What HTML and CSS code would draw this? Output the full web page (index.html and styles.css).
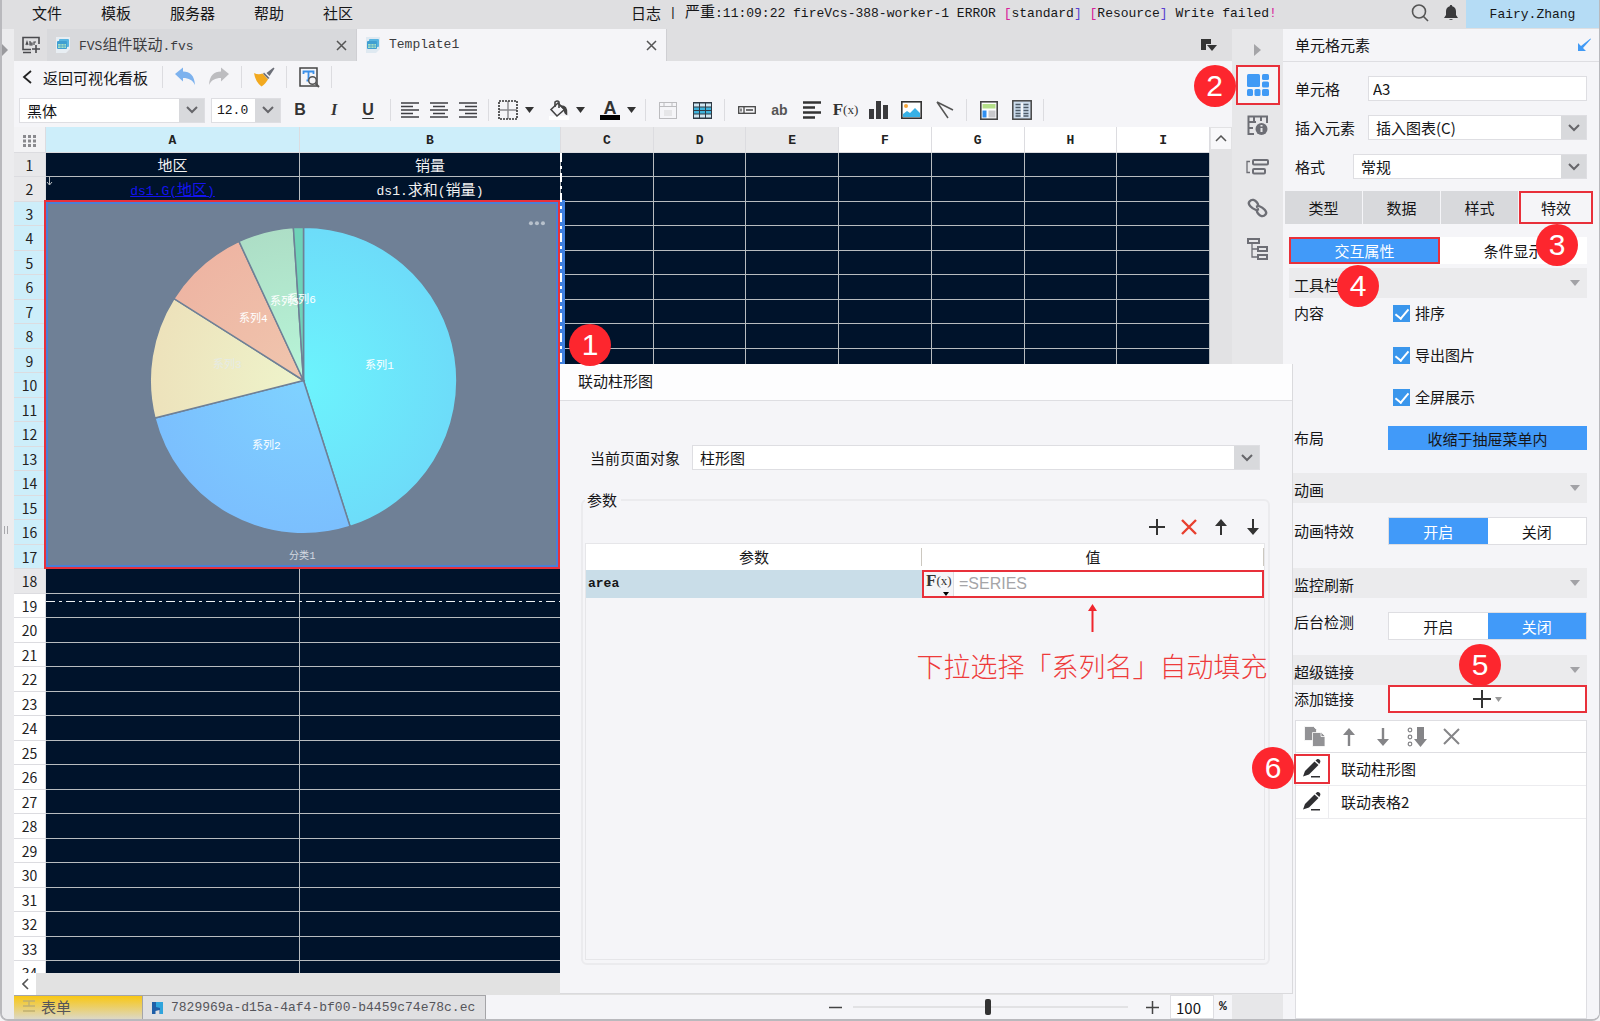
FILE: index.html
```html
<!DOCTYPE html>
<html lang="zh-CN">
<head>
<meta charset="utf-8">
<title>Template1</title>
<link rel="stylesheet" href="styles.css">
</head>
<body>
<div class="app">
  <header class="menubar">
    <nav class="menus">
      <a href="#">文件</a><a href="#">模板</a><a href="#">服务器</a><a href="#">帮助</a><a href="#">社区</a>
    </nav>
    <p class="log mono"><span class="cjk">日志</span><span class="bar">|</span><span><span class="cjk">严重</span>:11:09:22 fireVcs-388-worker-1 ERROR <i>[</i>standard<b>]</b> <i>[</i>Resource<b>]</b> Write failed<i>!</i></span></p>
    <button class="bare search" aria-label="搜索"><svg width="20" height="20" viewBox="0 0 20 20" fill="none" stroke="#555" stroke-width="1.6"><circle cx="9" cy="8.500" r="6.500"/><path d="M13.500 13.500l4.500 4.500"/></svg></button>
    <button class="bare bell" aria-label="通知"><svg width="16" height="18" viewBox="0 0 16 18" fill="#3a3a3c"><path d="M8 1c.8 0 1.200.5 1.200 1.200C12 3 13 5 13 7.500V11l2 3H1l2-3V7.500C3 5 4 3 6.800 2.200 6.800 1.500 7.200 1 8 1zM6.300 15h3.400c-.2 1.200-3.200 1.200-3.400 0z"/></svg></button>
    <button class="user mono">Fairy.Zhang</button>
  </header>

  <div class="body">
    <aside class="edge">
      <svg width="6" height="12" viewBox="0 0 6 12" fill="#9a9a9e"><path d="M0 0l6 6-6 6z"/></svg>
      <span class="grip"></span>
    </aside>

    <main class="main">
      <div class="tabs">
        <button class="bare new-tab" aria-label="新建"><svg width="20" height="18" viewBox="0 0 20 18" fill="none" stroke="#4a4a4e" stroke-width="1.6"><path d="M10 13.500H2V1.500h16V8M2 16.500h8M15 9v8M11 13h8"/><path d="M5 9l1-3 1 3M9 5v4h2V7H9M15 6h-2v3" stroke-width="1.200"/></svg></button>
        <div class="tab">
          <svg class="doc" width="16" height="18" viewBox="0 0 16 18"><path d="M1 1h14v12l-4 4H1z" fill="#e8eef3"/><rect x="4" y="3" width="10" height="8" rx="1" fill="#58b4e0"/><rect x="2" y="5" width="10" height="8" rx="1" fill="#3f9fd2"/><rect x="3" y="8" width="8" height="4" fill="#a6dfc3"/><path d="M3 10h8M6 8v4M9 8v4" stroke="#3f9fd2" stroke-width=".7"/></svg>
          <span class="mono name">FVS<span class="cjk">组件联动</span>.fvs</span>
          <button class="bare" aria-label="关闭"><svg width="11" height="11" viewBox="0 0 11 11" stroke="#555" stroke-width="1.500"><path d="M1 1l9 9M10 1l-9 9"/></svg></button>
        </div>
        <div class="tab active">
          <svg class="doc" width="16" height="18" viewBox="0 0 16 18"><path d="M1 1h14v12l-4 4H1z" fill="#dfe9f1"/><rect x="4" y="3" width="10" height="8" rx="1" fill="#58b4e0"/><rect x="2" y="5" width="10" height="8" rx="1" fill="#3f9fd2"/><rect x="3" y="8" width="8" height="4" fill="#a6dfc3"/><path d="M3 10h8M6 8v4M9 8v4" stroke="#3f9fd2" stroke-width=".7"/></svg>
          <span class="mono name">Template1</span>
          <button class="bare" aria-label="关闭"><svg width="11" height="11" viewBox="0 0 11 11" stroke="#555" stroke-width="1.500"><path d="M1 1l9 9M10 1l-9 9"/></svg></button>
        </div>
        <button class="bare tab-list" aria-label="标签列表"><svg width="16" height="13" viewBox="0 0 16 13" fill="#333"><path d="M0 0h10v5H5v6H0z"/><path d="M6 6h10l-5 6z"/></svg></button>
      </div>

      <div class="toolbar">
        <button class="back"><svg width="10" height="14" viewBox="0 0 10 14" fill="none" stroke="#222" stroke-width="1.800"><path d="M9 1L2 7l7 6"/></svg>返回可视化看板</button>
        <span class="sep wide"></span>
        <button class="tool" aria-label="撤销"><svg width="22" height="20" viewBox="0 0 22 20" fill="#7db2ee"><path d="M1 7l8-6.500V4.500c7 0 11.500 4 12 13.500-2.500-5-6-7-12-7v3.500z"/></svg></button>
        <button class="tool" aria-label="重做"><svg width="22" height="20" viewBox="0 0 22 20" fill="#bdbdc0"><path d="M21 7l-8-6.500V4.500C6 4.500 1.500 8.500 1 18c2.500-5 6-7 12-7v3.500z"/></svg></button>
        <span class="sep"></span>
        <button class="tool" aria-label="格式刷"><svg width="22" height="20" viewBox="0 0 22 20"><path d="M20.500.5l1 1-5 7.500-3-3z" fill="#6c6f78"/><path d="M11 5.500l5.500 5.500-1.500 1L10 7z" fill="#6c6f78"/><path d="M1 6c3 1.500 6 1.500 8.500.5l5.500 6c-1.500 2.500-3.500 5-6.500 7C4.500 16.500 2 12 1 6z" fill="#f2a91f"/></svg></button>
        <span class="sep"></span>
        <button class="tool" aria-label="预览"><svg width="21" height="21" viewBox="0 0 21 21" fill="none"><rect x="1" y="1" width="17" height="18" stroke="#444" stroke-width="1.500"/><path d="M4.500 7V4.500h10V7M9.500 4.500v9M7.500 13.500h4" stroke="#3b8fe8" stroke-width="1.800"/><circle cx="13.500" cy="13.500" r="3.800" fill="#f5f5f8" stroke="#555" stroke-width="1.500"/><path d="M16.500 16.500l3.500 3.500" stroke="#555" stroke-width="2"/></svg></button>
        <span class="sep"></span>
      </div>

      <div class="toolbar format">
        <span class="combo font"><select aria-label="字体"><option>黑体</option></select><span class="arrow"><svg width="12" height="8" viewBox="0 0 12 8"><path d="M1 1l5 5 5-5"/></svg></span></span>
        <span class="combo size"><select class="mono" aria-label="字号"><option>12.0</option></select><span class="arrow"><svg width="12" height="8" viewBox="0 0 12 8"><path d="M1 1l5 5 5-5"/></svg></span></span>
        <button class="tool glyph b">B</button>
        <button class="tool glyph i">I</button>
        <button class="tool glyph u">U</button>
        <span class="sep"></span>
        <button class="tool narrow" aria-label="左对齐"><svg width="19" height="16" viewBox="0 0 19 16" stroke="#3f3f43" stroke-width="1.700"><path d="M0 1h18M0 4.500h12M0 8h18M0 11.500h12M0 15h18"/></svg></button>
        <button class="tool narrow" aria-label="居中"><svg width="19" height="16" viewBox="0 0 19 16" stroke="#3f3f43" stroke-width="1.700"><path d="M0 1h18M3 4.500h12M0 8h18M3 11.500h12M0 15h18"/></svg></button>
        <button class="tool narrow" aria-label="右对齐"><svg width="19" height="16" viewBox="0 0 19 16" stroke="#3f3f43" stroke-width="1.700"><path d="M0 1h18M6 4.500h12M0 8h18M6 11.500h12M0 15h18"/></svg></button>
        <span class="sep"></span>
        <button class="tool drop" aria-label="边框"><svg width="20" height="20" viewBox="0 0 20 20" fill="none"><path d="M10 1v18M1 10h18" stroke="#8a8a8e" stroke-width="1.400"/><path d="M1 1h18v18H1z" stroke="#333" stroke-width="1.600" stroke-dasharray="2 1"/></svg><svg class="caret" width="9" height="6" viewBox="0 0 9 6"><path d="M0 0h9L4.500 6z"/></svg></button>
        <button class="tool drop gap" aria-label="填充"><svg width="20" height="20" viewBox="0 0 20 20" fill="none" stroke="#444" stroke-width="1.600"><rect x="0" y="16" width="20" height="4" fill="#fff" stroke="none"/><path d="M2 9.500L9 3l6.500 6.500L8 16z"/><path d="M6 7V2q2.500-2 4 0v6"/><path d="M12 6c4 0 6 2 5.500 8-2-1-2-3-2-4.500z" fill="#444"/></svg><svg class="caret" width="9" height="6" viewBox="0 0 9 6"><path d="M0 0h9L4.500 6z"/></svg></button>
        <button class="tool drop gap" aria-label="字体颜色"><span class="ink">A</span><svg class="caret" width="9" height="6" viewBox="0 0 9 6"><path d="M0 0h9L4.500 6z"/></svg></button>
        <span class="sep"></span>
        <button class="tool" aria-label="合并"><svg width="18" height="17" viewBox="0 0 18 17" fill="none" stroke="#bcbcbf"><rect x=".5" y=".5" width="17" height="16"/><path d="M1 4.500h16M5 1v4M13 1v4" /><path d="M5 8h8v6H5z" fill="#e6e6e8" stroke="none"/></svg></button>
        <button class="tool" aria-label="拆分"><svg width="19" height="17" viewBox="0 0 19 17"><rect width="19" height="17" fill="#2f3a45"/><path d="M1 1.500h5v3H1zM7 1.500h5v3H7zM13 1.500h5v3h-5zM1 12.500h5v3H1zM7 12.500h5v3H7zM13 12.500h5v3h-5z" fill="#cfe6f2"/><path d="M1 5.500h5v2.500H1zM7 5.500h5v2.500H7zM13 5.500h5v2.500h-5zM1 9h5v2.500H1zM7 9h5v2.500H7zM13 9h5v2.500h-5z" fill="#3fb3dc"/></svg></button>
        <span class="sep"></span>
        <button class="tool mid" aria-label="控件"><svg width="18" height="8" viewBox="0 0 18 8" fill="none" stroke="#444" stroke-width="1.300"><rect x=".7" y=".7" width="16.600" height="6.600"/><path d="M6 1v6M8 4h7M3 2.500v3"/></svg></button>
        <button class="tool mid ab">ab</button>
        <button class="tool mid" aria-label="富文本"><svg width="19" height="18" viewBox="0 0 19 18" stroke="#333" stroke-width="2.400"><path d="M0 1.500h18M0 6.500h12M0 11.500h18M0 16.500h12"/></svg></button>
        <button class="tool mid fx">F<small>(x)</small></button>
        <button class="tool mid" aria-label="图表"><svg width="19" height="18" viewBox="0 0 19 18" fill="#3a3a3d"><path d="M0 8h5v10H0zM7 0h5v18H7zM14 4h5v14h-5z"/></svg></button>
        <button class="tool mid" aria-label="图片"><svg width="21" height="18" viewBox="0 0 21 18"><rect x=".8" y=".8" width="19.400" height="16.400" fill="#fff" stroke="#333" stroke-width="1.600"/><circle cx="5" cy="5" r="2" fill="#f7a63c"/><path d="M2 16v-3l4-3 3 2 5-5 5 5v4z" fill="#37b1e6"/></svg></button>
        <button class="tool mid" aria-label="斜线"><svg width="18" height="18" viewBox="0 0 18 18" fill="none" stroke="#555" stroke-width="1.500"><path d="M1 1l16 8M1 1l11 16"/></svg></button>
        <span class="sep"></span>
        <button class="tool mid" aria-label="报表块"><svg width="18" height="19" viewBox="0 0 18 19"><rect x=".8" y=".8" width="16.400" height="17.400" fill="#fff" stroke="#444" stroke-width="1.600"/><path d="M2.500 3h13v4.500h-13z" fill="#b5e08a"/><path d="M2.500 9.500h4v7h-4z" fill="#2f8ff0"/><path d="M8.500 9.500h7v7h-7z" fill="#c9c9cc"/></svg></button>
        <button class="tool mid" aria-label="子报表"><svg width="20" height="20" viewBox="0 0 20 20"><rect x=".8" y=".8" width="18.400" height="18.400" fill="#ccdcec" stroke="#444" stroke-width="1.500"/><path d="M3.500 4.500h5M3.500 7.500h5M3.500 10.500h5M3.500 13.500h5M3.500 16h5M11.500 4.500h5M11.500 7.500h5M11.500 10.500h5M11.500 13.500h5M11.500 16h5" stroke="#4d5b68" stroke-width="1.300"/><path d="M10 3v14" stroke="#fff" stroke-width="1.500"/></svg></button>
        <span class="sep"></span>
      </div>

      <div class="work">
        <div class="sheet">
          <table class="grid">
            <colgroup><col class="c-num"><col class="c-a"><col class="c-b"><col span="7"></colgroup>
            <thead>
              <tr>
                <th class="corner"><svg width="14" height="12" viewBox="0 0 14 12" fill="#8a8a8e"><path d="M0 0h3v3H0zM5 0h3v3H5zM10 0h3v3h-3zM0 4.500h3v3H0zM5 4.500h3v3H5zM10 4.500h3v3h-3zM0 9h3v3H0zM5 9h3v3H5zM10 9h3v3h-3z"/></svg></th>
                <th class="on">A</th><th class="on">B</th><th class="in">C</th><th class="in">D</th><th class="in">E</th><th>F</th><th>G</th><th>H</th><th>I</th>
              </tr>
            </thead>
            <tbody id="rows">
              <tr><th class="in">1</th><td><span class="cjk">地区</span></td><td><span class="cjk">销量</span></td><td></td><td></td><td></td><td></td><td></td><td></td><td></td></tr>
              <tr><th class="in">2</th><td class="expand"><svg width="7" height="9" viewBox="0 0 7 9" fill="none" stroke="#b7bcbf"><path d="M3.500 0v8M1 5l2.500 3L6 5"/></svg><a href="#">ds1.G(<span class="cjk">地区</span>)</a></td><td>ds1.<span class="cjk">求和</span>(<span class="cjk">销量</span>)</td><td></td><td></td><td></td><td></td><td></td><td></td><td></td></tr>
              <tr><th class="on">3</th>
                <td class="chart" colspan="2" rowspan="15">
                  <div class="selection">
                    <svg class="pie" viewBox="1 0 511 364" preserveAspectRatio="xMidYMid meet" stroke="#6f8096" stroke-width="1.500">
                      <defs>
                        <radialGradient id="g1" gradientUnits="userSpaceOnUse" cx="258" cy="178" r="153"><stop offset="0" stop-color="#6cf4fd"/><stop offset="1" stop-color="#6ddcf9"/></radialGradient>
                        <radialGradient id="g2" gradientUnits="userSpaceOnUse" cx="258" cy="178" r="153"><stop offset="0" stop-color="#7fd2ff"/><stop offset="1" stop-color="#7bbffe"/></radialGradient>
                        <radialGradient id="g3" gradientUnits="userSpaceOnUse" cx="258" cy="178" r="153"><stop offset="0" stop-color="#eef4cb"/><stop offset="1" stop-color="#ede2bb"/></radialGradient>
                        <radialGradient id="g4" gradientUnits="userSpaceOnUse" cx="258" cy="178" r="153"><stop offset="0" stop-color="#f0c6ae"/><stop offset="1" stop-color="#eeb5a3"/></radialGradient>
                        <radialGradient id="g5" gradientUnits="userSpaceOnUse" cx="258" cy="178" r="153"><stop offset="0" stop-color="#b8f5d8"/><stop offset="1" stop-color="#addec6"/></radialGradient>
                      </defs>
                      <path fill="url(#g1)" d="M258 178V25A153 153 0 0 1 304.500 323.800z"/>
                      <path fill="url(#g2)" d="M258 178L304.500 323.800A153 153 0 0 1 109.700 215.500z"/>
                      <path fill="url(#g3)" d="M258 178L109.700 215.500A153 153 0 0 1 128.700 96.200z"/>
                      <path fill="url(#g4)" d="M258 178L128.700 96.200A153 153 0 0 1 193.600 39.200z"/>
                      <path fill="url(#g5)" d="M258 178L193.600 39.200A153 153 0 0 1 247.900 25.300z"/>
                      <path fill="#6fd3b8" d="M258 178L247.900 25.300A153 153 0 0 1 258 25z"/>
                      <g stroke="none" fill="#fff" font-size="11" text-anchor="middle">
                        <text x="334" y="167">系列1</text><text x="221" y="246">系列2</text><text x="182" y="166" fill="#e6ebe4">系列3</text><text x="208" y="120">系列4</text><text x="239" y="103">系列5</text><text x="256" y="101">系列6</text>
                        <text x="257" y="356" font-size="10" fill="#d5dbe2">分类1</text>
                      </g>
                      <g stroke="none" fill="#b8c1cc"><circle cx="485" cy="21" r="2"/><circle cx="491" cy="21" r="2"/><circle cx="497" cy="21" r="2"/></g>
                    </svg>
                    <span class="badge b1">1</span>
                  </div>
                </td><td></td><td></td><td></td><td></td><td></td><td></td><td></td></tr>
            </tbody>
          </table>
          <span class="page-break across"></span>
          <span class="page-break down"></span>
        </div>
        <div class="vscroll"><button class="bare" aria-label="向上"><svg width="12" height="7" viewBox="0 0 12 7" fill="none" stroke="#555" stroke-width="1.500"><path d="M1 6l5-5 5 5"/></svg></button></div>
      </div>
      <div class="hscroll"><button class="bare" aria-label="向左"><svg width="7" height="12" viewBox="0 0 7 12" fill="none" stroke="#555" stroke-width="1.600"><path d="M6 1L1 6l5 5"/></svg></button></div>

      <footer class="status">
        <button class="page current"><svg width="12" height="12" viewBox="0 0 12 12" fill="none" stroke="#c0b070" stroke-width="1.400"><path d="M0 1h12M0 6h12M0 11h12M6 1v5"/></svg>表单</button>
        <button class="page file mono"><svg width="11" height="12" viewBox="0 0 11 12"><path d="M0 0h11v12H7.500V8L3.500 9v3H0z" fill="#1f5fa8"/><path d="M4 0h7v12H8V6L4 5z" fill="#2fa4dc"/></svg>7829969a-d15a-4af4-bf00-b4459c74e78c.ec</button>
        <div class="zoom">
          <button class="bare" aria-label="缩小"><svg width="13" height="13" viewBox="0 0 13 13" stroke="#444" stroke-width="1.500"><path d="M0 6.500h13"/></svg></button>
          <input type="range" min="0" max="100" value="49" aria-label="缩放">
          <button class="bare" aria-label="放大"><svg width="13" height="13" viewBox="0 0 13 13" stroke="#444" stroke-width="1.500"><path d="M0 6.500h13M6.500 0v13"/></svg></button>
          <label class="percent mono"><input class="cjk" type="text" value="100">%</label>
        </div>
      </footer>
    </main>

    <nav class="rail">
      <svg class="fold" width="7" height="12" viewBox="0 0 7 12" fill="#a5a5a8"><path d="M0 0l7 6-7 6z"/></svg>
      <button class="bare marked" aria-label="单元格元素"><svg width="22" height="22" viewBox="0 0 22 22" fill="#419af5"><rect x="0" y="0" width="13" height="13" rx="1.500"/><rect x="15" y="0" width="7" height="6" rx="1.500"/><rect x="15" y="7.500" width="7" height="6" rx="1.500"/><rect x="0" y="15" width="6" height="7" rx="1.500"/><rect x="7.500" y="15" width="6" height="7" rx="1.500"/><rect x="15" y="15" width="7" height="7" rx="1.500"/></svg><span class="badge b2">2</span></button>
      <button class="bare" aria-label="单元格属性"><svg width="22" height="22" viewBox="0 0 22 22" fill="none" stroke="#6d6e75" stroke-width="2"><path d="M20 8V1.500H1.500V19H7M7 1v6M14 1v5M2 7h7M2 13h4"/><circle cx="14.500" cy="14" r="6" fill="#6d6e75" stroke="none"/><path d="M14.500 13v4M14.500 10v1.500" stroke="#e7e7e9"/></svg></button>
      <button class="bare" aria-label="悬浮元素"><svg width="24" height="18" viewBox="0 0 24 18" fill="none" stroke="#6d6e75" stroke-width="2"><rect x="7" y="2" width="15" height="4.500" rx="1"/><rect x="7" y="11" width="12" height="4.500" rx="1"/><path d="M4 3.500H1v11h3" stroke-width="1.300"/></svg></button>
      <button class="bare" aria-label="超级链接"><svg width="22" height="20" viewBox="0 0 22 20" fill="none" stroke="#6d6e75" stroke-width="2.400"><path d="M9 12C5 10.500 0 6.500 2.500 3.500S8 2 10 4.500s1 4-1 4.500M12 8c4 1.500 9 5.500 6.500 8.500S13 18 11 15.500s-1-4 1-4.500"/></svg></button>
      <button class="bare" aria-label="条件属性"><svg width="22" height="22" viewBox="0 0 22 22" fill="none" stroke="#6d6e75" stroke-width="2"><rect x="1" y="1" width="11" height="4"/><rect x="11" y="9" width="9" height="4"/><rect x="11" y="17" width="9" height="4"/><path d="M5 6v13h5M5 11h5" stroke-width="1.300"/></svg></button>
    </nav>

    <aside class="panel">
      <h1>单元格元素<svg width="14" height="14" viewBox="0 0 14 14" fill="#419af5"><path d="M13.500.5l.5.5-8 9 3 3H1V5l3 3z"/></svg></h1>
      <form class="fields">
        <p><label for="cell">单元格</label><input class="cjk" id="cell" type="text" value="A3"></p>
        <p><label for="insert">插入元素</label><span class="combo"><select id="insert"><option>插入图表(C)</option></select><span class="arrow"><svg width="12" height="8" viewBox="0 0 12 8"><path d="M1 1l5 5 5-5"/></svg></span></span></p>
        <p><label class="short" for="format">格式</label><span class="combo"><select id="format"><option>常规</option></select><span class="arrow"><svg width="12" height="8" viewBox="0 0 12 8"><path d="M1 1l5 5 5-5"/></svg></span></span></p>
      </form>
      <div class="ptabs"><button>类型</button><button>数据</button><button>样式</button><button class="marked">特效<span class="badge b3">3</span></button></div>
      <div class="subtabs"><button class="marked">交互属性<span class="badge b4">4</span></button><button>条件显示</button></div>

      <h2 class="first">工具栏<svg width="10" height="6" viewBox="0 0 10 6"><path d="M0 0h10L5 6z"/></svg></h2>
      <div class="row tall"><span class="name">内容</span>
        <div class="checks">
          <label><input type="checkbox" checked>排序</label>
          <label><input type="checkbox" checked>导出图片</label>
          <label><input type="checkbox" checked>全屏展示</label>
        </div>
      </div>
      <div class="row layout"><span class="name">布局</span><button class="fold-btn">收缩于抽屉菜单内</button></div>

      <h2 class="spaced">动画<svg width="10" height="6" viewBox="0 0 10 6"><path d="M0 0h10L5 6z"/></svg></h2>
      <div class="row"><span class="name">动画特效</span><div class="seg"><button class="on">开启</button><button>关闭</button></div></div>

      <h2 class="spaced">监控刷新<svg width="10" height="6" viewBox="0 0 10 6"><path d="M0 0h10L5 6z"/></svg></h2>
      <div class="row top"><span class="name">后台检测</span><div class="seg"><button>开启</button><button class="on">关闭</button></div></div>

      <h2>超级链接<svg width="10" height="6" viewBox="0 0 10 6"><path d="M0 0h10L5 6z"/></svg></h2>
      <div class="row flush"><span class="name">添加链接</span><button class="add marked" aria-label="添加链接"><svg width="18" height="18" viewBox="0 0 18 18" stroke="#333" stroke-width="2"><path d="M0 9h18M9 0v18"/></svg><svg width="7" height="5" viewBox="0 0 7 5" fill="#999"><path d="M0 0h7L3.500 5z"/></svg><span class="badge b5">5</span></button></div>

      <div class="links">
        <div class="link-tools">
          <button class="bare" aria-label="复制"><svg width="22" height="21" viewBox="0 0 22 21" fill="#929295" stroke="#fff" stroke-width=".8"><path d="M.5.500h9l3 3v11h-12z"/><path d="M8.500 6.500h9l3.500 3.500v10.500H8.500z"/><path d="M17 6.500v4h4" fill="none"/></svg></button>
          <button class="bare" aria-label="上移"><svg width="12" height="18" viewBox="0 0 12 18" fill="#858588"><path d="M6 0l6 7H7.200v11H4.800V7H0z"/></svg></button>
          <button class="bare" aria-label="下移"><svg width="12" height="18" viewBox="0 0 12 18" fill="#858588"><path d="M6 18l6-7H7.200V0H4.800v11H0z"/></svg></button>
          <button class="bare" aria-label="排序"><svg width="20" height="20" viewBox="0 0 20 20" fill="#858588"><path d="M10 0h7v12h3l-6.500 8L7 12h3z"/><g fill="none" stroke="#858588" stroke-width="1.200"><circle cx="3" cy="3" r="1.800"/><circle cx="3" cy="10" r="1.800"/><circle cx="3" cy="17" r="1.800"/></g></svg></button>
          <button class="bare" aria-label="删除"><svg width="17" height="17" viewBox="0 0 17 17" stroke="#858588" stroke-width="2"><path d="M1 1l15 15M16 1L1 16"/></svg></button>
        </div>
        <div class="link"><button class="bare pencil marked" aria-label="编辑"><svg width="18" height="20" viewBox="0 0 18 20" fill="#2f2f32"><path d="M0 17.500L2 12 11.500 2.500l4 3.500L6 15.500z"/><path d="M12.500 1.500l1.500-1.200c2-.8 4 1.200 3.200 3L16.300 5z"/><path d="M8 17h9v1.500H8z"/></svg><span class="badge b6">6</span></button><span>联动柱形图</span></div>
        <div class="link"><button class="bare pencil" aria-label="编辑"><svg width="18" height="20" viewBox="0 0 18 20" fill="#2f2f32"><path d="M0 17.500L2 12 11.500 2.500l4 3.500L6 15.500z"/><path d="M12.500 1.500l1.500-1.200c2-.8 4 1.200 3.200 3L16.300 5z"/><path d="M8 17h9v1.500H8z"/></svg></button><span>联动表格2</span></div>
      </div>
    </aside>
  </div>

  <section class="dialog" role="dialog" aria-labelledby="dlg-title">
    <h2 id="dlg-title">联动柱形图</h2>
    <div class="target"><label for="obj">当前页面对象</label><span class="combo"><select id="obj"><option>柱形图</option></select><span class="arrow"><svg width="12" height="8" viewBox="0 0 12 8"><path d="M1 1l5 5 5-5"/></svg></span></span></div>
    <fieldset>
      <legend>参数</legend>
      <div class="param-tools">
        <button class="bare" aria-label="添加"><svg width="16" height="16" viewBox="0 0 16 16" stroke="#333" stroke-width="2"><path d="M0 8h16M8 0v16"/></svg></button>
        <button class="bare" aria-label="删除"><svg width="16" height="16" viewBox="0 0 16 16" stroke="#e8402f" stroke-width="2.400"><path d="M1 1l14 14M15 1L1 15"/></svg></button>
        <button class="bare" aria-label="上移"><svg width="12" height="16" viewBox="0 0 12 16" fill="#333"><path d="M6 0l6 7H7v9H5V7H0z"/></svg></button>
        <button class="bare" aria-label="下移"><svg width="12" height="16" viewBox="0 0 12 16" fill="#333"><path d="M6 16l6-7H7V0H5v9H0z"/></svg></button>
      </div>
      <div class="param-box">
        <table class="params">
          <thead><tr><th>参数</th><th>值</th></tr></thead>
          <tbody><tr><td class="mono">area</td><td><div class="value marked"><button class="fx" aria-label="公式">F<small>(x)</small><svg width="6" height="4" viewBox="0 0 6 4"><path d="M0 0h6L3 4z"/></svg></button><input type="text" value="=SERIES" aria-label="值"></div></td></tr></tbody>
        </table>
        <div class="hint">
          <svg width="9" height="28" viewBox="0 0 9 28" fill="#f0262d"><path d="M4.500 0L9 7H5.500v21h-2V7H0z"/></svg>
          <p>下拉选择「系列名」自动填充</p>
        </div>
      </div>
    </fieldset>
  </section>
</div>
<script src="script.js"></script>
</body>
</html>
```

FILE: styles.css
```css
* { box-sizing: border-box; }

body, h1, h2, p, fieldset { margin: 0; padding: 0; border: 0; }

body, button, input, select {
  font-family: "Noto Sans CJK SC", sans-serif;
  font-size: 15px;
  color: #161618;
}

body { background: #f4f4f6; }
button { margin: 0; padding: 0; border: 0; background: none; }
a { color: inherit; text-decoration: none; }
svg { display: block; flex: none; }

.mono { font-family: "Liberation Mono", "Noto Sans CJK SC", monospace; font-size: 13px; }
.cjk { font-family: "Noto Sans CJK SC", sans-serif; font-size: 15px; }
.bare { display: flex; align-items: center; justify-content: center; position: relative; }
.marked { border: 2px solid #e8303a; }

.app {
  position: relative;
  display: flex;
  flex-direction: column;
  height: 100vh;
  overflow: hidden;
  border: solid #b9b9bd;
  border-width: 0 1px 2px 2px;
  border-radius: 0 0 8px 8px;
  background: #f5f5f8;
  line-height: 20px;
}

/* menu bar */
.menubar { display: flex; flex: none; height: 29px; padding-bottom: 4px; background: #dfdfe1; align-items: center; }
.menus { display: flex; gap: 39px; width: 629px; padding-left: 30px; flex: none; }
.menubar > .log { flex: 1; display: flex; gap: 4px; white-space: nowrap; align-items: center; }
.log .bar { width: 16px; text-align: center; }
.log i { font-style: normal; color: #d8209a; }
.log b { font-weight: 400; color: #5a3fd0; }
.search { width: 31px; }
.bell { width: 31px; }
.user { width: 133px; height: 28px; align-self: flex-start; background: #b5dcf5; }

.body { display: flex; flex: 1; min-height: 0; }
.edge { width: 12px; flex: none; background: #ececee; display: flex; flex-direction: column; padding-top: 15px; }
.grip { width: 4px; height: 8px; margin: 470px 0 0 2px; border: solid #a8a8ac; border-width: 0 1px; }
.main { flex: 1; min-width: 0; display: flex; flex-direction: column; }

/* document tabs */
.tabs { display: flex; flex: none; height: 32px; background: #dfdfe1; }
.new-tab { width: 33px; }
.tab { display: flex; align-items: center; width: 310px; padding: 0 9px 0 8px; background: #d8d9dc; border-right: 1px solid #cfcfd3; }
.tab .name { flex: 1; padding-left: 8px; color: #3c3c40; }
.tab.active { background: #f5f5f8; }
.tab-list { margin-left: auto; width: 47px; }

/* toolbars */
.toolbar { display: flex; flex: none; align-items: center; height: 32px; }
.toolbar.format { height: 34px; padding-left: 5px; }
.back { display: flex; align-items: center; gap: 11px; padding-left: 8px; white-space: nowrap; }
.sep { width: 1px; height: 22px; margin: 0 5px; background: #dcdce0; flex: none; }
.sep.wide { margin: 0 5px 0 14px; }
.tool { display: flex; align-items: center; justify-content: center; width: 34px; height: 26px; flex: none; color: #333; }
.tool.narrow { width: 29px; }
.tool.mid { width: 33px; }
.tool.drop { width: 44px; gap: 7px; }
.tool.gap { margin-left: 7px; }
.glyph { font-family: "Liberation Sans", sans-serif; font-weight: 700; font-size: 16px; }
.glyph.i { font-family: "Liberation Serif", serif; font-style: italic; }
.glyph.u { text-decoration: underline; text-underline-offset: 3px; }
.caret { fill: #333; }
.ink { width: 20px; height: 20px; line-height: 16px; font-family: "Liberation Sans", sans-serif; font-weight: 700; font-size: 18px; border-bottom: 5px solid #000; }
.ab { font-family: "Liberation Sans", sans-serif; font-size: 14px; font-weight: 700; color: #555; }
.fx { font-family: "Liberation Serif", serif; font-size: 17px; font-weight: 700; color: #333; }
.fx small { font-size: 13px; font-weight: 400; }

.combo { display: flex; height: 25px; border: 1px solid #dedee2; background: #fff; }
.combo select { flex: 1; min-width: 0; appearance: none; border: 0; background: none; padding: 0 0 0 7px; }
.combo .arrow { width: 25px; display: flex; align-items: center; justify-content: center; background: #d8d9dc; pointer-events: none; }
.arrow path { fill: none; stroke: #66666a; stroke-width: 2; }
.combo.font { width: 186px; margin-right: 6px; }
.combo.size { width: 70px; margin-right: 2px; }
.combo.size select { padding-left: 5px; }

/* spreadsheet */
.work { display: flex; flex: 1; min-height: 0; }
.sheet { position: relative; flex: 1; min-width: 0; overflow: hidden; background: #00132b; }
.grid { width: 100%; table-layout: fixed; border-spacing: 0; font-family: "Liberation Mono", monospace; font-size: 13px; line-height: 20px; }
.c-num { width: 32px; }
.c-a { width: 254px; }
.c-b { width: 261px; }
.grid th, .grid td { padding: 3px 0 0; text-align: center; border: solid #b7bcbf; border-width: 0 1px 1px 0; overflow: hidden; white-space: nowrap; }
.grid th { background: #fff; border-color: #dcdce0; font-weight: 700; color: #222; }
.grid tbody th { padding: 0; }
.grid th.on { background: #cdeefa; }
.grid th.in { background: #e8e8ea; }
.grid th.corner { background: #f3f3f5; }
.corner svg { margin: 0 auto; }
.grid thead tr { height: 26px; }
.grid tbody tr { height: 24px; }
.grid tbody tr:nth-child(even) { height: 25px; }
.grid tbody th { font-family: "Noto Sans CJK SC", sans-serif; font-size: 14px; font-weight: 400; }
.grid td { color: #f2f2f2; line-height: 16px; }
.grid td a { color: #1414f0; text-decoration: underline; }
.grid td.expand { position: relative; }
.expand svg { position: absolute; left: 0; top: 0; }
.grid td.chart { position: relative; overflow: visible; background: #6f8096; border: 0; }
.selection { position: absolute; inset: -2px 1px 0 -2px; border: 2px solid #e8303a; box-shadow: inset 0 0 0 2px #4a7fd6, 5px 0 0 #3f80e0; }
.pie { width: 100%; height: 100%; }
.page-break { position: absolute; }
.page-break.across { left: 32px; top: 474px; width: 514px; height: 1px; background: repeating-linear-gradient(90deg, #eef0f2 0 9px, transparent 9px 13px, #eef0f2 13px 16px, transparent 16px 20px); }
.page-break.down { left: 546px; top: 26px; width: 2px; height: 448px; background: repeating-linear-gradient(#fff 0 9px, transparent 9px 13px, #fff 13px 16px, transparent 16px 20px); }
.vscroll { width: 22px; flex: none; background: #e2e2e4; padding: 1px; }
.vscroll button { width: 20px; height: 21px; background: #f8f8fa; }
.hscroll { flex: none; height: 22px; background: #e2e2e2; }
.hscroll button { width: 22px; height: 22px; background: #fff; }

/* status bar */
.status { display: flex; flex: none; height: 24px; }
.page { display: flex; align-items: center; gap: 8px; padding-left: 9px; border: solid #a5a5a8; border-width: 1px 1px 0 0; white-space: nowrap; color: #55555a; }
.page.current { width: 129px; gap: 6px; padding-bottom: 3px; background: linear-gradient(#f9c713, #dcd8c6); }
.page.file { width: 343px; background: #e0e0e2; }
.zoom { display: flex; align-items: center; margin-left: auto; gap: 11px; }
.zoom > input { appearance: none; width: 275px; height: 18px; margin: 0 7px 0 0; background: linear-gradient(#e2e2e4, #e2e2e4) center / 100% 2px no-repeat; }
.zoom > input::-webkit-slider-thumb { appearance: none; width: 6px; height: 16px; border-radius: 2px; background: #333; }
.percent { display: flex; align-items: center; gap: 5px; width: 62px; font-weight: 700; }
.percent input { width: 44px; height: 24px; padding: 0 0 0 5px; border: 1px solid #dedee2; background: #fff; }

/* icon rail */
.rail { width: 51px; flex: none; display: flex; flex-direction: column; align-items: center; background: #e7e7e9; }
.rail .fold { margin: 15px 0 9px; }
.rail button { width: 44px; height: 41px; }
.rail button.marked { height: 40px; background: #f5f5f8; }

/* property panel */
.panel { width: 316px; flex: none; display: flex; flex-direction: column; background: #f5f5f8; }
.panel h1 { display: flex; align-items: center; justify-content: space-between; height: 33px; padding: 0 8px 0 12px; font-size: 15px; font-weight: 400; border-bottom: 1px solid #dedee2; }
.fields { display: flex; flex-direction: column; gap: 14px; padding: 14px 12px 12px 12px; }
.fields p { display: flex; align-items: center; height: 25px; }
.fields label { width: 73px; flex: none; }
.fields label.short { width: 58px; }
.fields input, .fields .combo { flex: 1; min-width: 0; height: 25px; }
.fields input { padding: 0 4px; border: 1px solid #dedee2; background: #fff; }
.ptabs { display: flex; gap: 1px; height: 33px; padding: 0 6px 0 2px; flex: none; }
.ptabs button { flex: 1; background: #d8d9dc; }
.ptabs button.marked { position: relative; flex: 0 0 74px; background: #f5f5f8; border: 2px solid #e8303a; }
.subtabs { display: flex; height: 27px; margin: 13px 12px 4px 6px; flex: none; }
.subtabs button { position: relative; flex: 1; background: #fff; }
.subtabs button.marked { background: #419af9; color: #fff; }
.panel h2 { display: flex; flex: none; align-items: center; justify-content: space-between; height: 30px; margin: 15px 12px 0 6px; padding: 3px 7px 0 5px; background: #ebebed; font-size: 15px; font-weight: 400; }
.panel h2.first { margin-top: 0; }
.panel h2.spaced { margin-top: 23px; }
.panel h2 svg { fill: #a2a2a6; margin-top: -3px; }
.row { display: flex; flex: none; align-items: center; height: 28px; margin: 14px 12px 0 11px; }
.row .name { width: 94px; flex: none; }
.row.tall { height: 114px; margin-top: 0; align-items: flex-start; line-height: 30px; }
.row.layout { height: 24px; }
.row.top { align-items: flex-start; }
.row.flush { margin-top: 0; }
.checks { display: flex; flex-direction: column; gap: 12px; padding-left: 5px; }
.checks label { display: flex; align-items: center; gap: 5px; height: 30px; }
.checks input { appearance: none; display: flex; justify-content: center; width: 17px; height: 17px; margin: 0; background: #3a96ec; }
.checks input::after { content: ""; width: 6px; height: 11px; margin-top: 1px; border: solid #fff; border-width: 0 2px 2px 0; transform: rotate(40deg); }
.fold-btn { flex: 1; height: 24px; background: #419af9; }
.seg { display: flex; flex: 1; height: 28px; border: 1px solid #dedee2; background: #fff; }
.seg button { flex: 1; }
.seg .on { background: #419af9; color: #fff; }
.add { display: flex; flex: 1; align-items: center; justify-content: center; gap: 4px; position: relative; height: 28px; background: #fff; }
.links { flex: 1; margin: 7px 12px 0 12px; border: 1px solid #dedee2; background: #fff; }
.link-tools { display: flex; align-items: center; gap: 20px; height: 32px; padding-left: 8px; border-bottom: 1px solid #dedee2; }
.link-tools button { width: 14px; }
.link-tools button:first-child { width: 22px; margin-right: -4px; }
.link { display: flex; align-items: center; height: 33px; gap: 12px; border-bottom: 1px solid #ececef; }
.link .pencil { width: 33px; height: 32px; border-right: 1px solid #ececef; }
.link .pencil.marked { width: 36px; height: 30px; margin: 0 -1px 0 -2px; border: 2px solid #e8303a; }

/* hyperlink dialog */
.dialog { position: absolute; z-index: 10; left: 558px; right: 306px; top: 364px; bottom: 25px; display: flex; flex-direction: column; background: #f5f5f8; border-right: 1px solid #dadadd; border-bottom: 1px solid #dadadd; }
.dialog > h2 { flex: none; height: 37px; padding: 7px 18px; background: #fdfdfe; border-bottom: 1px solid #dedee2; font-size: 15px; font-weight: 400; }
.target { display: flex; align-items: center; height: 25px; margin: 44px 32px 20px 30px; flex: none; }
.target label { width: 102px; }
.target .combo { flex: 1; }
.dialog fieldset { flex: 1; min-width: 0; display: flex; flex-direction: column; margin: 0 22px 28px 21px; padding: 0 3px 3px 2px; border: 2px solid #ebebee; border-radius: 6px; }
.dialog legend { padding: 0 4px 0 2px; }
.param-tools { display: flex; justify-content: flex-end; align-items: center; gap: 16px; height: 33px; padding: 0 4px 0 0; }
.param-tools button { width: 16px; }
.param-box { flex: 1; border: 1px solid #e6e6e9; }
.params { width: 100%; table-layout: fixed; border-spacing: 0; }
.params th { height: 26px; padding: 0; font-weight: 400; background: linear-gradient(#ccc8c0, #ccc8c0) right center / 1px 18px no-repeat #fff; }
.params td { height: 28px; padding: 0; background: #c9dde8; }
.params td.mono { padding-left: 2px; font-weight: 700; }
.params th:first-child { width: 336px; }
.value { display: flex; height: 28px; background: #fff; }
.value .fx { display: flex; position: relative; width: 30px; background: #f5f5f8; border-right: 1px solid #dedee2; padding-left: 2px; line-height: 18px; }
.value .fx svg { position: absolute; right: 4px; bottom: 0; }
.value input { flex: 1; min-width: 0; border: 0; padding: 0 0 0 5px; background: none; color: #a5a5a8; font-family: "Liberation Sans", sans-serif; font-size: 16px; }
.hint { display: flex; flex-direction: column; align-items: center; gap: 14px; margin-top: 6px; padding-left: 334px; color: #ee3b3b; }
.hint p { font-size: 27px; font-weight: 300; line-height: 40px; white-space: nowrap; }

/* numbered callouts lie over the controls that they point at */
.badge { position: absolute; z-index: 20; width: 42px; height: 42px; border-radius: 50%; background: #fd262e; color: #fff; font: 30px/42px "Liberation Sans", sans-serif; text-align: center; }
.b1 { right: -53px; top: 122px; }
.b2 { right: 42px; top: -2px; }
.b3 { left: 15px; top: 31px; }
.b4 { left: 46px; top: 26px; }
.b5 { left: 69px; top: -43px; }
.b6 { right: 34px; top: -9px; }
```

FILE: script.js
```js
// Fill the sheet with its remaining rows, 4 to 34. Rows up to 17 lie beside the merged chart cell.
const body = document.getElementById("rows");
for (let n = 4; n <= 34; n++) {
  const row = body.insertRow();
  const head = document.createElement("th");
  head.textContent = n;
  head.className = n <= 17 ? "on" : n === 18 ? "in" : "";
  row.append(head);
  const cells = n <= 17 ? 7 : 9;
  for (let c = 0; c < cells; c++) row.insertCell();
}
```
